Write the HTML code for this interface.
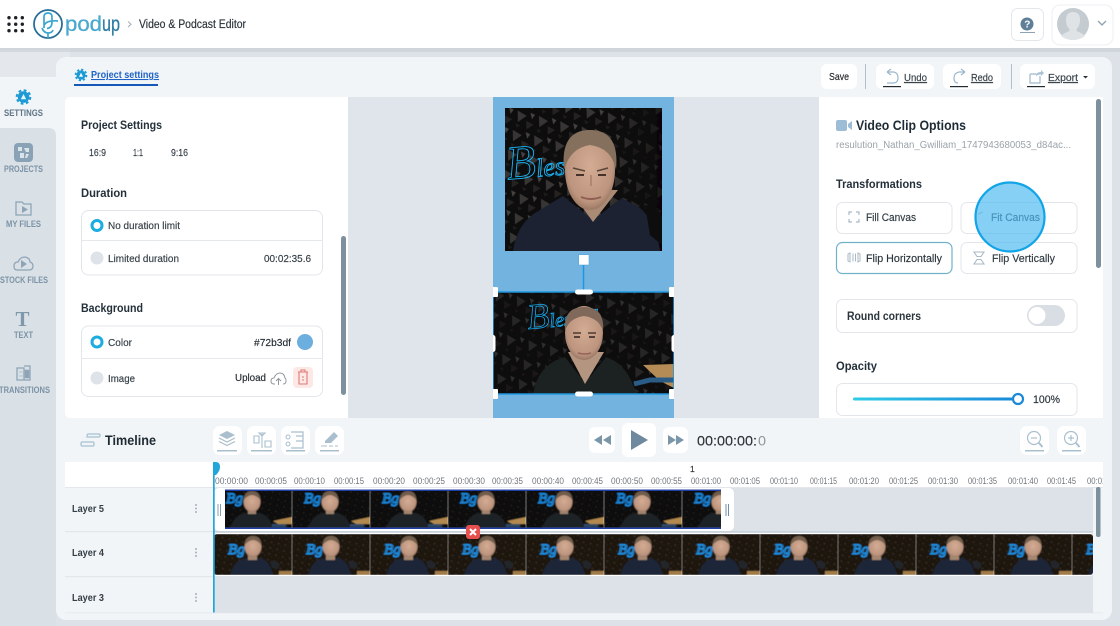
<!DOCTYPE html>
<html lang="en">
<head>
<meta charset="utf-8">
<title>Podup Video &amp; Podcast Editor</title>
<style>
html,body{margin:0;padding:0;width:1120px;height:626px;overflow:hidden;background:#dce2e8}
svg.page{display:block;filter:blur(.3px)}
text{font-family:"Liberation Sans",sans-serif;fill:#1f2a33;font-size:10px;stroke:#2a333a;stroke-width:.16}
.b{font-weight:bold;stroke:none}
.lbl{font-size:10.5px;fill:#39444d}
.side{font-size:9px;font-weight:bold;fill:#7c93a6;stroke:none}
.tick{font-size:9px;fill:#6f767c;stroke:none}
.ic{fill:none;stroke:#9db8cc;stroke-width:1.2}
.ic2{fill:none;stroke:#a9bcc9;stroke-width:1.1}
.neon{font-family:"Liberation Serif",serif;font-style:italic;fill:none}
</style>
</head>
<body>
<svg class="page" xmlns="http://www.w3.org/2000/svg" width="1120" height="626" viewBox="0 0 1120 626">
<defs>
  <pattern id="wall" width="22" height="20" patternUnits="userSpaceOnUse" patternTransform="rotate(14)">
    <rect width="22" height="20" fill="#0f0d0e"/>
    <polygon points="1,2 11,5 4,13" fill="#393635"/>
    <polygon points="12,10 20,12 14,18" fill="#262423"/>
    <polygon points="14,1 19,2 17,7" fill="#454241"/>
    <polygon points="2,15 7,16 4,19" fill="#1f1d1c"/>
  </pattern>
  <pattern id="wallS" width="7" height="6" patternUnits="userSpaceOnUse" patternTransform="rotate(12)">
    <rect width="7" height="6" fill="#120e0d"/>
    <polygon points="1,1 3.4,1.6 1.8,3.4" fill="#3d3935"/>
    <polygon points="4.4,3.4 6,3.9 4.9,5.3" fill="#2d2a27"/>
  </pattern>
  <filter id="soft" x="-5%" y="-5%" width="110%" height="110%"><feGaussianBlur stdDeviation=".6"/></filter>
  <filter id="soft2" x="-5%" y="-5%" width="110%" height="110%"><feGaussianBlur stdDeviation=".35"/></filter>
  <linearGradient id="sl" x1="0" x2="1"><stop offset="0" stop-color="#2ecbe6"/><stop offset="1" stop-color="#1a88da"/></linearGradient>
  <radialGradient id="skin" cx=".5" cy=".45" r=".6"><stop offset="0" stop-color="#d4ac94"/><stop offset=".75" stop-color="#bd957e"/><stop offset="1" stop-color="#8a6a58"/></radialGradient>
  <linearGradient id="fade" x1="0" x2="1"><stop offset=".6" stop-color="#000" stop-opacity="0"/><stop offset="1" stop-color="#000" stop-opacity=".55"/></linearGradient>
  <clipPath id="c1"><rect x="225" y="490" width="496" height="38"/></clipPath>
  <clipPath id="c2"><rect x="214" y="534" width="879" height="41" rx="3"/></clipPath>
  <clipPath id="c3"><rect x="65" y="462" width="1038" height="26"/></clipPath>
  <clipPath id="cv1"><rect x="505" y="108" width="157" height="143"/></clipPath>
  <clipPath id="cv2"><rect x="493" y="292" width="181" height="102"/></clipPath>
  <clipPath id="cv"><rect x="493" y="97" width="181" height="321"/></clipPath>

  <symbol id="t4" width="78" height="41" viewBox="0 0 78 41" overflow="hidden">
    <g filter="url(#soft)">
      <rect width="78" height="41" fill="url(#wallS)"/>
      <rect width="78" height="41" fill="#3a2414" opacity=".28"/>
      <text x="14" y="20" class="neon" style="font-size:15px;stroke:#1f97ee;stroke-width:.9" textLength="17" lengthAdjust="spacingAndGlyphs">Bg</text>
      <path d="M16 41Q20 26 32 24L46 24Q56 26 59 41Z" fill="#1b2637"/>
      <rect x="34" y="18" width="9" height="8" fill="#a68771"/>
      <ellipse cx="39" cy="13" rx="8.500" ry="10" fill="url(#skin)"/>
      <path d="M30.500 11Q31 2 39 2Q47 2 47.500 11Q43 6 39 6Q35 6 30.500 11Z" fill="#75604e"/>
      <path d="M56 27Q62 26 66 30L64 35L58 34Z" fill="#23272b"/>
      <rect x="65" y="37" width="13" height="4" fill="#a07c48"/>
    </g>
  </symbol>
  <symbol id="t5" width="78" height="38" viewBox="0 0 78 38" overflow="hidden">
    <g filter="url(#soft)">
      <rect width="78" height="38" fill="url(#wallS)"/>
      <rect width="78" height="38" fill="#000" opacity=".35"/>
      <text x="12" y="13" class="neon" style="font-size:15px;stroke:#1a8fe6;stroke-width:.9" textLength="17" lengthAdjust="spacingAndGlyphs">Bg</text>
      <path d="M16 38Q20 26 30 23L46 23Q56 26 59 38Z" fill="#1f2225"/>
      <rect x="34" y="17" width="8" height="7" fill="#a08470"/>
      <ellipse cx="38" cy="12" rx="8.500" ry="10" fill="url(#skin)"/>
      <path d="M29.500 10Q30 1 38 1Q46 1 46.500 10Q42 5 38 5Q34 5 29.500 10Z" fill="#705c4b"/>
      <polygon points="59,31 78,27 78,34 64,34" fill="#b28a50"/>
      <rect x="58" y="34" width="14" height="3" fill="#2d4a66"/>
    </g>
  </symbol>
</defs>

<!-- App background -->
<rect width="1120" height="626" fill="#dce2e8"/>
<rect x="0" y="50" width="70" height="40" fill="#e4e8ec"/>

<!-- Main panel -->
<rect x="56" y="57" width="1056" height="563" rx="10" fill="#f2f5f7"/>

<!-- Sidebar -->
<rect x="0" y="77" width="60" height="51" fill="#f2f5f7"/>
<path d="M0 52H56V69Q56 77 48 77H0Z" fill="#e4e8ec"/>
<rect x="0" y="128" width="60" height="10" fill="#f2f5f7"/>
<path d="M0 128H48Q56 128 56 136V626H0Z" fill="#d9e0e6"/>

<!-- Header -->
<rect x="0" y="48" width="1120" height="4" fill="#c4cacf" opacity=".55"/>
<rect x="0" y="0" width="1120" height="48" fill="#fff"/>
<g fill="#1d2226">
  <circle cx="9" cy="17.700" r="1.700"/><circle cx="15.700" cy="17.700" r="1.700"/><circle cx="22.300" cy="17.700" r="1.700"/>
  <circle cx="9" cy="24.200" r="1.700"/><circle cx="15.700" cy="24.200" r="1.700"/><circle cx="22.300" cy="24.200" r="1.700"/>
  <circle cx="9" cy="30.700" r="1.700"/><circle cx="15.700" cy="30.700" r="1.700"/><circle cx="22.300" cy="30.700" r="1.700"/>
</g>
<circle cx="48" cy="24" r="14" fill="none" stroke="#2a6f98" stroke-width="1.800"/>
<path d="M44 28V17Q44 13 48 13Q52 13 52 17V22Q52 28 47 28.500M44 25Q47 20 58 21M42 28Q44 33 48 33Q52 33 53 30M48 33V38" fill="none" stroke="#3aa6cf" stroke-width="1.700"/>
<text x="65" y="31" textLength="37" lengthAdjust="spacingAndGlyphs" style="font-size:21px;fill:#4aa9cf;stroke:#4aa9cf;stroke-width:.3">pod</text>
<text x="102" y="31" textLength="18" lengthAdjust="spacingAndGlyphs" style="font-size:21px;fill:#2e7ba3;stroke:#2e7ba3;stroke-width:.3">up</text>
<path d="M128 21.500L131 24.200L128 27" fill="none" stroke="#a5adb3" stroke-width="1"/>
<text x="139" y="28" textLength="107" lengthAdjust="spacingAndGlyphs" style="font-size:11.500px;fill:#2b3238">Video &amp; Podcast Editor</text>

<rect x="1011.500" y="8.500" width="32" height="32" rx="6" fill="#fff" stroke="#e3e7ea"/>
<circle cx="1027" cy="24" r="6.500" fill="#5f7f99"/>
<text x="1024.300" y="27.500" class="b" style="font-size:10px;fill:#fff">?</text>
<rect x="1020" y="32" width="15" height="1" fill="#8da3b3"/>
<rect x="1052" y="5" width="61" height="40" rx="8" fill="#fff" stroke="#eceff1"/>
<circle cx="1073" cy="24" r="16" fill="#c4ccd1"/>
<path d="M1073 12Q1080 12 1080 20Q1080 26 1076.500 29V31Q1082 33 1085 36Q1080 40 1073 40Q1066 40 1061 36Q1064 33 1069.500 31V29Q1066 26 1066 20Q1066 12 1073 12Z" fill="#dfe3e6"/>
<path d="M1098 21L1102 25L1106 21" fill="none" stroke="#8ea1b0" stroke-width="1.300"/>

<!-- Toolbar -->
<g transform="translate(81 75)">
  <circle r="4.600" fill="#1c9ad6"/>
  <circle r="5.400" fill="none" stroke="#1c9ad6" stroke-width="1.800" stroke-dasharray="2.200 2.040"/>
  <path d="M0 -2.300L2 1.800H-2Z" fill="#fff"/>
</g>
<text x="91" y="78" textLength="68" lengthAdjust="spacingAndGlyphs" class="b" style="font-size:10.500px;fill:#1f63c6;text-decoration:underline">Project settings</text>
<rect x="74" y="84" width="84" height="2" fill="#1558b8"/>

<rect x="821" y="64" width="36" height="25" rx="6" fill="#fff"/>
<text x="829" y="80" textLength="20" lengthAdjust="spacingAndGlyphs" style="font-size:10.500px;fill:#222">Save</text>
<rect x="865" y="64" width="1" height="25" fill="#b0bfcb"/>
<rect x="876" y="64" width="58" height="25" rx="6" fill="#fff"/>
<path d="M887 72H894Q898 73 898 78Q898 83 893 83H887M887 72L891 69M887 72L891 75" class="ic"/>
<text x="904" y="81" textLength="23" lengthAdjust="spacingAndGlyphs" style="font-size:10.500px;fill:#3d4850;text-decoration:underline">Undo</text>
<rect x="883" y="86" width="18" height="1.200" fill="#222b30"/>
<rect x="943" y="64" width="58" height="25" rx="6" fill="#fff"/>
<path d="M965 72H959Q954 73 954 78Q954 83 958 83M965 72L961 69M965 72L961 75" class="ic"/>
<text x="971" y="81" textLength="22" lengthAdjust="spacingAndGlyphs" style="font-size:10.500px;fill:#3d4850;text-decoration:underline">Redo</text>
<rect x="950" y="86" width="18" height="1.200" fill="#222b30"/>
<rect x="1011" y="64" width="1" height="25" fill="#b0bfcb"/>
<rect x="1020" y="64" width="75" height="25" rx="6" fill="#fff"/>
<path d="M1030 74H1036M1030 74V83H1040V76" class="ic"/>
<path d="M1036 76L1036 74Q1038 72 1041 72V70L1044 73L1041 76V74.500Q1038 74.500 1036 76Z" fill="#a9c3d6"/>
<text x="1048" y="81" textLength="30" lengthAdjust="spacingAndGlyphs" style="font-size:10.500px;fill:#3d4850;text-decoration:underline">Export</text>
<path d="M1083 76H1088L1085.500 78.500Z" fill="#2a3238"/>
<rect x="1027" y="86" width="18" height="1.200" fill="#222b30"/>

<!-- Sidebar items -->
<g transform="translate(23.500 97)">
  <circle r="5.800" fill="#1c9ad6"/>
  <circle r="6.800" fill="none" stroke="#1c9ad6" stroke-width="2" stroke-dasharray="2.800 2.540"/>
  <path d="M0 -3L2.700 2.300H-2.700Z" fill="#e8f4fa"/>
</g>
<text x="4" y="116" textLength="39" lengthAdjust="spacingAndGlyphs" class="side" style="fill:#5e7588">SETTINGS</text>
<rect x="14" y="143" width="19" height="19" rx="4" fill="#8aa2b5"/>
<path d="M18 147h4v4h-4zM24 148h5v4h-3zM20 153h4v5h-4zM26 154l3 0-2 4h-2z" fill="#d9e3ea"/>
<text x="4" y="172" textLength="39" lengthAdjust="spacingAndGlyphs" class="side">PROJECTS</text>
<path d="M16 202H22L24 204H31V215H16Z" fill="none" stroke="#8fa5b7" stroke-width="1.300"/>
<path d="M22 206V213L28 209.500Z" fill="#8fa5b7"/>
<text x="6" y="227" textLength="35" lengthAdjust="spacingAndGlyphs" class="side">MY FILES</text>
<path d="M19 270H17Q14 270 14 266Q14 262 18 262Q20 257 25 257Q30 258 30 262Q33 263 33 266Q33 270 29 270Z" fill="none" stroke="#8fa5b7" stroke-width="1.300"/>
<path d="M21 260V268L27 264Z" fill="#8fa5b7"/>
<text x="0" y="283" textLength="48" lengthAdjust="spacingAndGlyphs" class="side">STOCK FILES</text>
<text x="15.500" y="326" style="font-family:'Liberation Serif',serif;font-weight:bold;font-size:21px;fill:#7f98ab;stroke:none">T</text>
<text x="14" y="338" textLength="19" lengthAdjust="spacingAndGlyphs" class="side">TEXT</text>
<path d="M17 368H24V380H17ZM24 366H30V380H24" fill="none" stroke="#8fa5b7" stroke-width="1.300"/>
<path d="M19 372H23M19 376H23M25 370H29V378H25Z" fill="#8fa5b7" stroke="#8fa5b7" stroke-width=".6"/>
<text x="-1" y="393" textLength="51" lengthAdjust="spacingAndGlyphs" class="side">TRANSITIONS</text>

<!-- Left panel -->
<rect x="65" y="97" width="1038" height="321" rx="5" fill="#fff"/>
<rect x="348" y="97" width="471" height="321" fill="#dfe5eb"/>
<text x="81" y="129" textLength="81" lengthAdjust="spacingAndGlyphs" class="b" style="font-size:12px;fill:#23303a">Project Settings</text>
<text x="89" y="156" textLength="17" lengthAdjust="spacingAndGlyphs" style="font-size:10.500px;fill:#3a444c">16:9</text>
<text x="133" y="156" textLength="10" lengthAdjust="spacingAndGlyphs" style="font-size:10.500px;fill:#3a444c">1:1</text>
<text x="171" y="156" textLength="17" lengthAdjust="spacingAndGlyphs" style="font-size:10.500px;fill:#3a444c">9:16</text>
<text x="81" y="197" textLength="46" lengthAdjust="spacingAndGlyphs" class="b" style="font-size:12px;fill:#23303a">Duration</text>

<rect x="81.500" y="210.500" width="241" height="64.500" rx="7" fill="#fff" stroke="#e2e6ea"/>
<rect x="82" y="240" width="240" height="1" fill="#e6e9ec"/>
<circle cx="97" cy="225.500" r="5" fill="#fff" stroke="#1bade0" stroke-width="3"/>
<text x="108" y="229" textLength="72" lengthAdjust="spacingAndGlyphs" class="lbl">No duration limit</text>
<circle cx="97" cy="258" r="6.500" fill="#dde3e8"/>
<text x="108" y="262" textLength="71" lengthAdjust="spacingAndGlyphs" class="lbl">Limited duration</text>
<text x="264" y="262" textLength="47" lengthAdjust="spacingAndGlyphs" class="lbl">00:02:35.6</text>

<text x="81" y="312" textLength="62" lengthAdjust="spacingAndGlyphs" class="b" style="font-size:12px;fill:#23303a">Background</text>
<rect x="81.500" y="326" width="241" height="70.500" rx="7" fill="#fff" stroke="#e2e6ea"/>
<rect x="82" y="358" width="240" height="1" fill="#e6e9ec"/>
<circle cx="97" cy="342" r="5" fill="#fff" stroke="#1bade0" stroke-width="3"/>
<text x="108" y="346" textLength="24" lengthAdjust="spacingAndGlyphs" class="lbl">Color</text>
<text x="254" y="346" textLength="37" lengthAdjust="spacingAndGlyphs" style="font-size:10.500px;fill:#22292f">#72b3df</text>
<circle cx="305" cy="342" r="8" fill="#6caede"/>
<circle cx="97" cy="378" r="6.500" fill="#dde3e8"/>
<text x="108" y="382" textLength="27" lengthAdjust="spacingAndGlyphs" class="lbl">Image</text>
<text x="235" y="381" textLength="31" lengthAdjust="spacingAndGlyphs" style="font-size:10.500px;fill:#22292f">Upload</text>
<path d="M275 384H274Q271 384 271 381Q271 378 274 378Q276 373 280 373Q284 373 285 378Q286 378 286 381Q286 384 283 384M278.500 385V379M276 381L278.500 378.500L281 381" fill="none" stroke="#8d979e" stroke-width="1"/>
<rect x="293" y="367" width="20" height="21" rx="4" fill="#fde8e6"/>
<path d="M298 372H308M301 372V370H305V372M299 372V384H307V372M302 377H304M302 380H304" fill="none" stroke="#e07a74" stroke-width="1.100"/>
<rect x="341" y="236" width="5" height="159" rx="2.500" fill="#7d909d"/>

<!-- Canvas -->
<rect x="493" y="97" width="181" height="321" fill="#72b3df"/>
<g filter="url(#soft2)">
  <g clip-path="url(#cv1)">
    <rect x="505" y="108" width="157" height="143" fill="url(#wall)"/>
    <rect x="505" y="108" width="157" height="143" fill="url(#fade)"/>
    <text x="506" y="177" class="neon" transform="rotate(-5 535 160)" style="stroke:#17b6f8;stroke-width:.9;font-size:26px"><tspan style="font-size:48px">B</tspan>lesse</text>
    <path d="M513 251Q517 222 540 210L563 196L593 220L622 198L640 208Q656 222 660 251Z" fill="#1a2330"/>
    <path d="M645 205Q662 205 662 225V245L650 235Z" fill="#0b0b0d"/>
    <path d="M570 190L593 222L618 190Z" fill="#a98a75"/>
    <ellipse cx="590" cy="170" rx="25" ry="40" fill="url(#skin)"/>
    <path d="M564 170Q560 130 590 130Q620 130 616 170Q612 148 590 145Q570 148 564 170Z" fill="#84705c"/>
    <path d="M573 168L585 171M597 171L608 168" stroke="#5a4538" stroke-width="1.600"/>
    <path d="M576 175H584M598 175H606" stroke="#33241d" stroke-width="1.800"/>
    <path d="M591 175V186" stroke="#a87f6a" stroke-width="1.500"/>
    <path d="M581 197Q591 201 601 197" stroke="#8f5f52" stroke-width="2" fill="none"/>
  </g>
  <g clip-path="url(#cv2)">
    <rect x="493" y="292" width="181" height="102" fill="url(#wall)"/>
    <rect x="493" y="292" width="181" height="102" fill="#000" opacity=".3"/>
    <text x="527" y="327" class="neon" transform="rotate(-5 552 315)" style="stroke:#17a9ee;stroke-width:.8;font-size:20px"><tspan style="font-size:36px">B</tspan>lessed</text>
    <path d="M533 394Q538 364 565 357L585 383L606 357Q628 364 636 394Z" fill="#1d2024"/>
    <path d="M568 352L585 384L604 352Z" fill="#b39580"/>
    <ellipse cx="584" cy="333" rx="19" ry="27" fill="url(#skin)"/>
    <path d="M565 331Q563 307 584 307Q605 307 603 331Q599 318 584 316Q569 318 565 331Z" fill="#80695a"/>
    <path d="M573 333H581M588 333H596" stroke="#4d3b30" stroke-width="1.500"/>
    <path d="M574 337H580M589 337H595" stroke="#33241d" stroke-width="1.500"/>
    <path d="M578 353Q585 355 591 353" stroke="#95645a" stroke-width="1.500" fill="none"/>
    <polygon points="643,365 674,364 674,388 660,381" fill="#b58b56"/>
    <path d="M634 384L650 380H674" stroke="#2b5b86" stroke-width="5" fill="none"/>
  </g>
</g>
<g clip-path="url(#cv)">
  <line x1="583.500" y1="265" x2="583.500" y2="292" stroke="#1e97e0" stroke-width="1.500"/>
  <rect x="578.700" y="254.700" width="10.300" height="10.300" fill="#fff" stroke="#5ba9dd" stroke-width=".6"/>
  <rect x="493" y="292" width="181" height="102" fill="none" stroke="#1e97e0" stroke-width="1.500"/>
  <rect x="488" y="287" width="10" height="10" rx="1" fill="#fff"/><rect x="669" y="287" width="10" height="10" rx="1" fill="#fff"/>
  <rect x="488" y="389" width="10" height="10" rx="1" fill="#fff"/><rect x="669" y="389" width="10" height="10" rx="1" fill="#fff"/>
  <rect x="575" y="289.500" width="18" height="5" rx="2.500" fill="#fff"/><rect x="575" y="391.500" width="18" height="5" rx="2.500" fill="#fff"/>
  <rect x="490.500" y="335" width="5" height="17" rx="2.500" fill="#fff"/><rect x="671.500" y="335" width="5" height="17" rx="2.500" fill="#fff"/>
</g>

<!-- Right panel -->
<rect x="819" y="97" width="284" height="321" fill="#fff"/>
<rect x="836" y="120" width="11" height="11" rx="2" fill="#9dbdd6"/>
<path d="M848 124L852 121V130L848 127Z" fill="#9dbdd6"/>
<text x="856" y="130" textLength="110" lengthAdjust="spacingAndGlyphs" class="b" style="font-size:13.500px;fill:#1f2b34">Video Clip Options</text>
<text x="836" y="148" textLength="235" lengthAdjust="spacingAndGlyphs" style="font-size:10px;fill:#9aa3aa;stroke:none">resulution_Nathan_Gwilliam_1747943680053_d84ac...</text>
<text x="836" y="188" textLength="86" lengthAdjust="spacingAndGlyphs" class="b" style="font-size:12px;fill:#23303a">Transformations</text>

<rect x="836.500" y="202.500" width="115.500" height="31" rx="6" fill="#fff" stroke="#e2e6ea"/>
<path d="M849 215V212H852M856 212H859V215M849 219V222H852M856 222H859V219" fill="none" stroke="#a9bac6" stroke-width="1.200"/>
<text x="866" y="221" textLength="50" lengthAdjust="spacingAndGlyphs" style="font-size:11px;fill:#333e46">Fill Canvas</text>
<rect x="961" y="202.500" width="116" height="31" rx="6" fill="#fff" stroke="#e2e6ea"/>
<text x="991" y="221" textLength="49" lengthAdjust="spacingAndGlyphs" style="font-size:11px;fill:#333e46">Fit Canvas</text>
<path d="M978 214L983 212" stroke="#a9bac6" stroke-width="1"/>
<rect x="836.500" y="242.500" width="115.500" height="31" rx="6" fill="#fff" stroke="#6fb2c9" stroke-width="1.200"/>
<path d="M850 253L848 254V261L850 262ZM853 253.500V261.500M855.500 253.500V261.500M858 253L860 254V261L858 262Z" fill="none" stroke="#a9bac6" stroke-width="1"/>
<text x="866" y="262" textLength="76" lengthAdjust="spacingAndGlyphs" style="font-size:11px;fill:#2b353d">Flip Horizontally</text>
<rect x="961" y="242.500" width="116" height="31" rx="6" fill="#fff" stroke="#e2e6ea"/>
<path d="M974 252H984L981 256.500H977ZM974 264H984L981 259.500H977Z" fill="none" stroke="#a9bac6" stroke-width="1.100"/>
<text x="992" y="262" textLength="63" lengthAdjust="spacingAndGlyphs" style="font-size:11px;fill:#333e46">Flip Vertically</text>

<rect x="836.500" y="299.500" width="240.500" height="33" rx="6" fill="#fff" stroke="#e2e6ea"/>
<text x="847" y="320" textLength="74" lengthAdjust="spacingAndGlyphs" class="b" style="font-size:11.500px;fill:#2b353d">Round corners</text>
<rect x="1027" y="305" width="38" height="21" rx="10.500" fill="#d8dee3"/>
<circle cx="1037" cy="315.500" r="8.500" fill="#fff"/>
<text x="836" y="370" textLength="41" lengthAdjust="spacingAndGlyphs" class="b" style="font-size:12px;fill:#23303a">Opacity</text>
<rect x="836.500" y="383.500" width="240.500" height="32" rx="6" fill="#fff" stroke="#e2e6ea"/>
<rect x="853" y="397.500" width="165" height="3" rx="1.500" fill="url(#sl)"/>
<circle cx="1018" cy="399" r="5" fill="#fff" stroke="#1a8ad8" stroke-width="2.200"/>
<text x="1033" y="403" textLength="27" lengthAdjust="spacingAndGlyphs" style="font-size:11px;fill:#2b353d">100%</text>
<rect x="1096" y="99" width="5" height="169" rx="2.500" fill="#7d909d"/>

<circle cx="1010" cy="217" r="34.500" fill="#4cb9f0" fill-opacity=".68" stroke="#11a4e6" stroke-width="2.200"/>

<!-- Timeline bar -->
<rect x="65" y="418" width="1047" height="44" fill="#f2f5f7"/>
<path d="M87 437H99Q100 437 100 435Q100 434 99 434H88Q87 434 87 437ZM82 442H93Q94 442 94 444Q94 446 93 446H82Q81 446 81 444Q81 442 82 442Z" fill="none" stroke="#a6c1d3" stroke-width="1.300"/>
<text x="105" y="445" textLength="51" lengthAdjust="spacingAndGlyphs" class="b" style="font-size:14px;fill:#1f2b34">Timeline</text>

<g fill="#fff">
  <rect x="213" y="426" width="29" height="29" rx="7"/><rect x="247" y="426" width="29" height="29" rx="7"/>
  <rect x="281" y="426" width="29" height="29" rx="7"/><rect x="315" y="426" width="29" height="29" rx="7"/>
  <rect x="589" y="427" width="26" height="26" rx="6"/><rect x="622" y="423" width="34" height="34" rx="6"/>
  <rect x="663" y="427" width="25" height="26" rx="6"/>
  <rect x="1020" y="426" width="29" height="29" rx="7"/><rect x="1057" y="426" width="29" height="29" rx="7"/>
</g>
<g fill="#a9bfce">
  <rect x="217" y="450" width="20" height="1.500"/><rect x="251" y="450" width="21" height="1.500"/>
  <rect x="286" y="450" width="19" height="1.500"/><rect x="320" y="450" width="19" height="1.500"/>
  <rect x="1025" y="450" width="19" height="1.500"/><rect x="1062" y="450" width="19" height="1.500"/>
</g>
<path d="M227 431L219 435L227 439L235 435Z" fill="#a9bfce"/>
<path d="M219 438L227 442L235 438M219 441.500L227 445.500L235 441.500" class="ic2"/>
<path d="M254 436H259V443H254ZM265 441H271V447H265ZM262 433V448M259 433H265L262 436Z" fill="none" stroke="#a9bfce" stroke-width="1.100"/>
<path d="M291 432H303V448H291M296 436H303M296 441H303" fill="none" stroke="#a9bfce" stroke-width="1.200"/>
<circle cx="288" cy="437" r="2" fill="none" stroke="#a9bfce"/><circle cx="288" cy="444" r="2" fill="none" stroke="#a9bfce"/>
<path d="M325 441L334 432L338 436L331 443H325Z" fill="#a9bfce"/>
<path d="M321 446H327M329 446H333M335 446H338" stroke="#a9bfce" stroke-width="1"/>

<path d="M602 435V445L594 440ZM611 435V445L603 440Z" fill="#7b95a9"/>
<path d="M631 430V450L648 440Z" fill="#6f8a9f"/>
<path d="M668 435V445L676 440ZM676 435V445L684 440Z" fill="#7b95a9"/>
<text x="697" y="445.500" textLength="60" lengthAdjust="spacingAndGlyphs" style="font-size:13.500px;fill:#2d3337">00:00:00:</text>
<text x="758" y="445.500" textLength="8" lengthAdjust="spacingAndGlyphs" style="font-size:13.500px;fill:#8f959a;stroke:none">0</text>

<circle cx="1034" cy="438" r="6.500" fill="none" stroke="#a9c0cf" stroke-width="1.200"/>
<path d="M1031 438H1037" stroke="#a9c0cf" stroke-width="1.200"/>
<path d="M1039 443L1042.500 447" stroke="#a9c0cf" stroke-width="2"/>
<circle cx="1071" cy="438" r="6.500" fill="none" stroke="#a9c0cf" stroke-width="1.200"/>
<path d="M1068 438H1074M1071 435V441" stroke="#a9c0cf" stroke-width="1.200"/>
<path d="M1076 443L1079.500 447" stroke="#a9c0cf" stroke-width="2"/>

<!-- Ruler -->
<rect x="65" y="462" width="1038" height="26" fill="#fff"/>
<rect x="65" y="487" width="1038" height="1" fill="#e3e7eb"/>
<g clip-path="url(#c3)">
  <text class="tick" x="215" y="484" textLength="33" lengthAdjust="spacingAndGlyphs">00:00:00</text>
  <text class="tick" x="255" y="484" textLength="32" lengthAdjust="spacingAndGlyphs">00:00:05</text>
  <text class="tick" x="294" y="484" textLength="31" lengthAdjust="spacingAndGlyphs">00:00:10</text>
  <text class="tick" x="334" y="484" textLength="30" lengthAdjust="spacingAndGlyphs">00:00:15</text>
  <text class="tick" x="373" y="484" textLength="32" lengthAdjust="spacingAndGlyphs">00:00:20</text>
  <text class="tick" x="413" y="484" textLength="32" lengthAdjust="spacingAndGlyphs">00:00:25</text>
  <text class="tick" x="453" y="484" textLength="32" lengthAdjust="spacingAndGlyphs">00:00:30</text>
  <text class="tick" x="492" y="484" textLength="31" lengthAdjust="spacingAndGlyphs">00:00:35</text>
  <text class="tick" x="532" y="484" textLength="32" lengthAdjust="spacingAndGlyphs">00:00:40</text>
  <text class="tick" x="572" y="484" textLength="31" lengthAdjust="spacingAndGlyphs">00:00:45</text>
  <text class="tick" x="611" y="484" textLength="32" lengthAdjust="spacingAndGlyphs">00:00:50</text>
  <text class="tick" x="651" y="484" textLength="31" lengthAdjust="spacingAndGlyphs">00:00:55</text>
  <text class="tick" x="691" y="484" textLength="30" lengthAdjust="spacingAndGlyphs">00:01:00</text>
  <text class="tick" x="730" y="484" textLength="30" lengthAdjust="spacingAndGlyphs">00:01:05</text>
  <text class="tick" x="770" y="484" textLength="28" lengthAdjust="spacingAndGlyphs">00:01:10</text>
  <text class="tick" x="810" y="484" textLength="27" lengthAdjust="spacingAndGlyphs">00:01:15</text>
  <text class="tick" x="849" y="484" textLength="30" lengthAdjust="spacingAndGlyphs">00:01:20</text>
  <text class="tick" x="889" y="484" textLength="29" lengthAdjust="spacingAndGlyphs">00:01:25</text>
  <text class="tick" x="928" y="484" textLength="30" lengthAdjust="spacingAndGlyphs">00:01:30</text>
  <text class="tick" x="968" y="484" textLength="29" lengthAdjust="spacingAndGlyphs">00:01:35</text>
  <text class="tick" x="1008" y="484" textLength="30" lengthAdjust="spacingAndGlyphs">00:01:40</text>
  <text class="tick" x="1047" y="484" textLength="29" lengthAdjust="spacingAndGlyphs">00:01:45</text>
  <text class="tick" x="1087" y="484" textLength="30" lengthAdjust="spacingAndGlyphs">00:01:50</text>
</g>
<text x="690" y="472" style="font-size:8.500px;fill:#333">1</text>

<!-- Tracks -->
<rect x="65" y="488" width="149" height="125" fill="#f2f5f7"/>
<rect x="65" y="531" width="149" height="1.200" fill="#e3e7eb"/>
<rect x="65" y="576" width="149" height="1.200" fill="#e3e7eb"/>
<rect x="214" y="488" width="879" height="125" fill="#dde2e8"/>
<rect x="1093" y="488" width="10" height="125" fill="#f2f5f7"/>
<rect x="214" y="531" width="879" height="1.500" fill="#c9d3dc"/>
<text x="72" y="512" textLength="32" lengthAdjust="spacingAndGlyphs" class="b" style="font-size:10.500px;fill:#333e46">Layer 5</text>
<text x="72" y="556" textLength="32" lengthAdjust="spacingAndGlyphs" class="b" style="font-size:10.500px;fill:#333e46">Layer 4</text>
<text x="72" y="601" textLength="32" lengthAdjust="spacingAndGlyphs" class="b" style="font-size:10.500px;fill:#333e46">Layer 3</text>
<g fill="#a4b2bd">
  <circle cx="196" cy="505" r="1"/><circle cx="196" cy="508.500" r="1"/><circle cx="196" cy="512" r="1"/>
  <circle cx="196" cy="549" r="1"/><circle cx="196" cy="552.500" r="1"/><circle cx="196" cy="556" r="1"/>
  <circle cx="196" cy="594" r="1"/><circle cx="196" cy="597.500" r="1"/><circle cx="196" cy="601" r="1"/>
</g>

<rect x="214" y="488" width="520" height="43" rx="5" fill="#fff"/>
<g clip-path="url(#c1)">
  <use href="#t5" x="214" y="490"/><use href="#t5" x="292" y="490"/><use href="#t5" x="370" y="490"/>
  <use href="#t5" x="448" y="490"/><use href="#t5" x="526" y="490"/><use href="#t5" x="604" y="490"/>
  <use href="#t5" x="682" y="490"/>
</g>
<rect x="225" y="489.500" width="496" height="1.500" fill="#1f3fa5"/>
<rect x="225" y="527.500" width="496" height="1.500" fill="#1f3fa5"/>
<path d="M218 504V516M220.500 504V516" stroke="#8d9cab" stroke-width="1"/>
<path d="M726 504V516M728.500 504V516" stroke="#6e8db0" stroke-width="1"/>

<rect x="214" y="533" width="879" height="43" rx="3" fill="#fff"/>
<g clip-path="url(#c2)">
  <use href="#t4" x="214" y="534"/><use href="#t4" x="292" y="534"/><use href="#t4" x="370" y="534"/>
  <use href="#t4" x="448" y="534"/><use href="#t4" x="526" y="534"/><use href="#t4" x="604" y="534"/>
  <use href="#t4" x="682" y="534"/><use href="#t4" x="760" y="534"/><use href="#t4" x="838" y="534"/>
  <use href="#t4" x="916" y="534"/><use href="#t4" x="994" y="534"/><use href="#t4" x="1072" y="534"/>
</g>

<rect x="466" y="525" width="14" height="14" rx="3" fill="#e85050"/>
<path d="M470 529L476 535M476 529L470 535" stroke="#fff" stroke-width="2"/>

<rect x="213" y="462" width="1.700" height="151" fill="#21a6d9"/>
<path d="M213 462H216Q220 462 220 467Q220 471 216 475H213Z" fill="#21a6d9"/>
<rect x="1096" y="487" width="4.500" height="50" rx="2" fill="#7d909d"/>

<!-- Bottom edge -->
<rect x="65" y="612.500" width="1038" height=".8" fill="#e3e7eb"/>
</svg>
</body>
</html>
